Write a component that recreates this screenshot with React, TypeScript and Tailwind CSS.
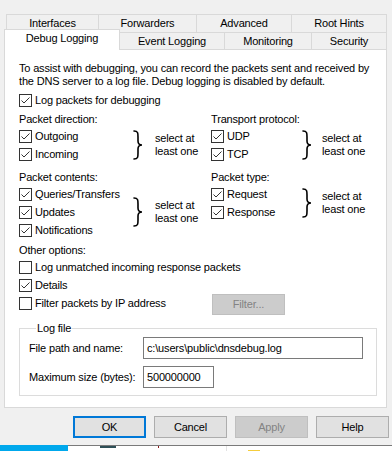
import React from 'react';

function Box({ checked }: { checked?: boolean }) {
  return (
    <span className="w-[13px] h-[13px] border border-[#333333] bg-white flex items-center justify-center shrink-0">
      {checked && (
        <svg width="11" height="11" viewBox="0 0 11 11">
          <path d="M1.5 5.5 L4 8 L9.5 2.5" fill="none" stroke="#333333" strokeWidth="1" />
        </svg>
      )}
    </span>
  );
}

function Check({ label, checked }: { label: string; checked?: boolean }) {
  return (
    <div className="h-[18px] flex items-center gap-[3px] whitespace-nowrap">
      <Box checked={checked} />
      <span>{label}</span>
    </div>
  );
}

function Brace() {
  return (
    <svg width="10" height="30" viewBox="0 0 10 30" className="shrink-0">
      <path
        d="M1,1 C5,1 5,3 5,7 L5,11 C5,13.5 6.5,15 9,15 C6.5,15 5,16.5 5,19 L5,23 C5,27 5,29 1,29"
        fill="none"
        stroke="#000"
        strokeWidth="1.6"
        strokeLinecap="round"
      />
    </svg>
  );
}

function Group({ items, listW, gap }: { items: string[]; listW: string; gap: string }) {
  return (
    <div className="flex items-center">
      <div className={listW}>
        {items.map((i) => (
          <Check key={i} label={i} checked />
        ))}
      </div>
      <Brace />
      <div className={gap}>
        select at
        <br />
        least one
      </div>
    </div>
  );
}

export default function App() {
  const row1 = [
    { t: 'Interfaces', w: 'w-[92px]' },
    { t: 'Forwarders', w: 'w-[98px]' },
    { t: 'Advanced', w: 'w-[95px]' },
    { t: 'Root Hints', w: 'w-[96px] border-r' },
  ];

  return (
    <div className="w-[392px] h-[451px] bg-[#f0f0f0] flex flex-col overflow-hidden text-[11px] leading-[13px] tracking-[-0.17px] text-black font-['Liberation_Sans',Arial,sans-serif]">
      {/* tab row 1 */}
      <div className="pt-[14px] pl-[6px] flex">
        {row1.map((r) => (
          <div key={r.t} className={`${r.w} h-[18px] border-t border-l border-[#d9d9d9] flex items-center justify-center`}>
            {r.t}
          </div>
        ))}
      </div>
      {/* tab row 2 */}
      <div className="pl-[4px] flex items-end h-[17px]">
        <div className="relative z-10 w-[116px] h-[21px] -mb-px bg-white border-t border-l border-r border-[#d9d9d9] flex items-center justify-center pb-[3px]">
          Debug Logging
        </div>
        <div className="w-[104px] h-[17px] border-t border-[#d9d9d9] flex items-center justify-center">Event Logging</div>
        <div className="w-[87px] h-[17px] border-t border-l border-[#d9d9d9] flex items-center justify-center">Monitoring</div>
        <div className="w-[76px] h-[17px] border-t border-l border-r border-[#d9d9d9] flex items-center justify-center">Security</div>
      </div>

      {/* panel */}
      <div className="ml-[4px] w-[383px] h-[359px] shrink-0 bg-white border border-[#d9d9d9] pl-[14px] flex flex-col">
        <p className="mt-[12px]">
          To assist with debugging, you can record the packets sent and received by
          <br />
          the DNS server to a log file. Debug logging is disabled by default.
        </p>
        <div className="mt-[3px]">
          <Check label="Log packets for debugging" checked />
        </div>

        <div className="mt-[2px] flex">
          <div className="w-[192px]">
            <div className="h-[16px] flex items-center">Packet direction:</div>
            <Group items={['Outgoing', 'Incoming']} listW="w-[114px]" gap="ml-[12px]" />
          </div>
          <div>
            <div className="h-[16px] flex items-center">Transport protocol:</div>
            <Group items={['UDP', 'TCP']} listW="w-[91px]" gap="ml-[10px]" />
          </div>
        </div>

        <div className="mt-[6px] flex">
          <div className="w-[192px]">
            <div className="h-[16px] flex items-center">Packet contents:</div>
            <Group items={['Queries/Transfers', 'Updates', 'Notifications']} listW="w-[114px]" gap="ml-[12px]" />
          </div>
          <div>
            <div className="h-[16px] flex items-center">Packet type:</div>
            <Group items={['Request', 'Response']} listW="w-[91px]" gap="ml-[10px]" />
          </div>
        </div>

        <div className="mt-[3px] h-[16px] flex items-center">Other options:</div>
        <Check label="Log unmatched incoming response packets" />
        <Check label="Details" checked />
        <div className="h-[18px] flex items-start">
          <div className="w-[193px]">
            <Check label="Filter packets by IP address" />
          </div>
          <button className="w-[73px] h-[21px] shrink-0 bg-[#cccccc] border border-[#bfbfbf] text-[#838383]">Filter...</button>
        </div>

        <fieldset className="mt-[10px] w-[358px] border border-[#dcdcdc] pl-[9px] pb-[7px]">
          <legend className="ml-[7px] px-[1px] leading-[13px]">Log file</legend>
          <div className="mt-[2px] h-[22px] flex items-center">
            <span className="w-[114px]">File path and name:</span>
            <div className="w-[220px] h-[22px] border border-[#7a7a7a] px-[3px] flex items-center">c:\users\public\dnsdebug.log</div>
          </div>
          <div className="mt-[7px] h-[22px] flex items-center">
            <span className="w-[114px]">Maximum size (bytes):</span>
            <div className="w-[71px] h-[22px] border border-[#7a7a7a] px-[3px] flex items-center">500000000</div>
          </div>
        </fieldset>
      </div>

      {/* buttons */}
      <div className="mt-[8px] pr-[3px] flex justify-end gap-[8px]">
        <button className="w-[73px] h-[22px] bg-[#e1e1e1] border-2 border-[#0078d7]">OK</button>
        <button className="w-[73px] h-[22px] bg-[#e1e1e1] border border-[#adadad]">Cancel</button>
        <button className="w-[73px] h-[22px] bg-[#cccccc] border border-[#bfbfbf] text-[#838383]">Apply</button>
        <button className="w-[73px] h-[22px] bg-[#e1e1e1] border border-[#adadad]">Help</button>
      </div>

      {/* strip of the window below */}
      <div className="mt-[7px] h-[6px] flex shrink-0">
        <div className="w-[68px] bg-[#00a8ec]" />
        <div className="flex-1 bg-white border-t border-[#7a7a7a] flex items-start">
          <span className="ml-[32px] w-[16px] h-[2px] bg-[#2e4f57]" />
          <span className="ml-[42px] w-[1px] h-[2px] bg-[#8b1a1a]" />
          <span className="ml-[67px] w-[1px] h-[5px] bg-[#e3e3e3]" />
          <span className="ml-[21px] mt-[4px] w-[12px] h-[1px] bg-[#f5cd3c]" />
        </div>
      </div>
    </div>
  );
}
